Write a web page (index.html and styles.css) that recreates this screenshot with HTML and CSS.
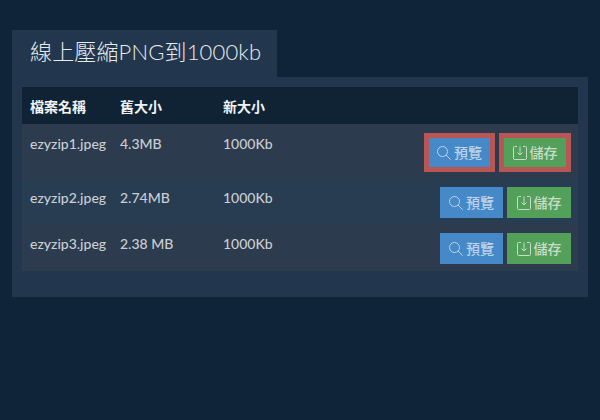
FILE: index.html
```html
<!DOCTYPE html>
<html lang="zh-Hant">
<head>
<meta charset="utf-8">
<title>線上壓縮PNG到1000kb</title>
<link rel="stylesheet" href="styles.css">
</head>
<body>
<main class="wrap">
  <h1 class="tab">線上壓縮PNG到1000kb</h1>
  <section class="panel">
    <table class="files">
      <thead>
        <tr><th class="c-name">檔案名稱</th><th class="c-old">舊大小</th><th class="c-new">新大小</th><th></th></tr>
      </thead>
      <tbody>
        <tr class="first">
          <td>ezyzip1.jpeg</td><td>4.3MB</td><td>1000Kb</td>
          <td class="actions">
            <a class="btn blue hot"><svg class="ico" viewBox="0 0 14 14"><circle cx="5.500" cy="5.500" r="5"/><path d="M9 9 13.700 13.700"/></svg>預覽</a><a class="btn green hot"><svg class="ico" viewBox="0 0 14 14"><path d="M4 .5H1.500a1 1 0 0 0-1 1v11a1 1 0 0 0 1 1h11a1 1 0 0 0 1-1v-11a1 1 0 0 0-1-1H10M7 .5v8.500M4.500 6.500 7 9 9.500 6.500"/></svg>儲存</a>
          </td>
        </tr>
        <tr class="alt">
          <td>ezyzip2.jpeg</td><td>2.74MB</td><td>1000Kb</td>
          <td class="actions">
            <a class="btn blue"><svg class="ico" viewBox="0 0 14 14"><circle cx="5.500" cy="5.500" r="5"/><path d="M9 9 13.700 13.700"/></svg>預覽</a><a class="btn green"><svg class="ico" viewBox="0 0 14 14"><path d="M4 .5H1.500a1 1 0 0 0-1 1v11a1 1 0 0 0 1 1h11a1 1 0 0 0 1-1v-11a1 1 0 0 0-1-1H10M7 .5v8.500M4.500 6.500 7 9 9.500 6.500"/></svg>儲存</a>
          </td>
        </tr>
        <tr class="last">
          <td>ezyzip3.jpeg</td><td>2.38 MB</td><td>1000Kb</td>
          <td class="actions">
            <a class="btn blue"><svg class="ico" viewBox="0 0 14 14"><circle cx="5.500" cy="5.500" r="5"/><path d="M9 9 13.700 13.700"/></svg>預覽</a><a class="btn green"><svg class="ico" viewBox="0 0 14 14"><path d="M4 .5H1.500a1 1 0 0 0-1 1v11a1 1 0 0 0 1 1h11a1 1 0 0 0 1-1v-11a1 1 0 0 0-1-1H10M7 .5v8.500M4.500 6.500 7 9 9.500 6.500"/></svg>儲存</a>
          </td>
        </tr>
      </tbody>
    </table>
  </section>
</main>
</body>
</html>
```
FILE: styles.css
```css
* { box-sizing: border-box; }
html, body { margin: 0; height: 100%; }
body {
  background: #0f2439;
  color: #c9ced3;
  font-family: Lato, "Noto Sans CJK TC", sans-serif;
  font-size: 14px;
  overflow: hidden;
}
.wrap { padding: 30px 12px 0; }
.tab {
  display: inline-block;
  vertical-align: top;
  margin: 0;
  width: 265px;
  height: 47px;
  padding: 7px 18px 0;
  background: #22374d;
  color: #e8ebee;
  font-size: 22px;
  font-weight: 300;
  letter-spacing: 0.15px;
  line-height: 29px;
  white-space: nowrap;
}
.panel {
  height: 220px;
  padding: 10px;
  background: #22374d;
}
.files {
  width: 100%;
  border-collapse: collapse;
  table-layout: fixed;
}
.files th {
  height: 37px;
  padding: 0 8px;
  background: #0f2335;
  color: #f0f2f4;
  font-size: 14px;
  font-weight: 700;
  text-align: left;
}
.c-name { width: 90px; }
.c-old { width: 103px; }
.c-new { width: 150px; }
.files td {
  padding: 9px 8px 6px;
  vertical-align: top;
  line-height: 21px;
  font-weight: 500;
}
.files td.actions { padding-right: 7px; }
.first td, .last td { background: #2d3b4e; }
.alt td { background: #283c52; }
.last td { padding-bottom: 7px; }
.actions { text-align: right; white-space: nowrap; font-size: 0; }
.btn {
  display: inline-flex;
  align-items: center;
  justify-content: center;
  gap: 3px;
  width: 63px;
  height: 31px;
  margin-left: 4px;
  font-size: 14px;
  color: #bdd2e6;
  vertical-align: top;
}
.blue { background: #4689c9; }
.green { background: #53a05a; color: #c9dccb; width: 64px; }
.hot { width: 71px; height: 39px; border: 5px solid #b85555; }
.green.hot { width: 72px; }
.ico { width: 14px; height: 14px; fill: none; stroke: currentColor; stroke-width: 1; flex: none; overflow: visible; }
```
